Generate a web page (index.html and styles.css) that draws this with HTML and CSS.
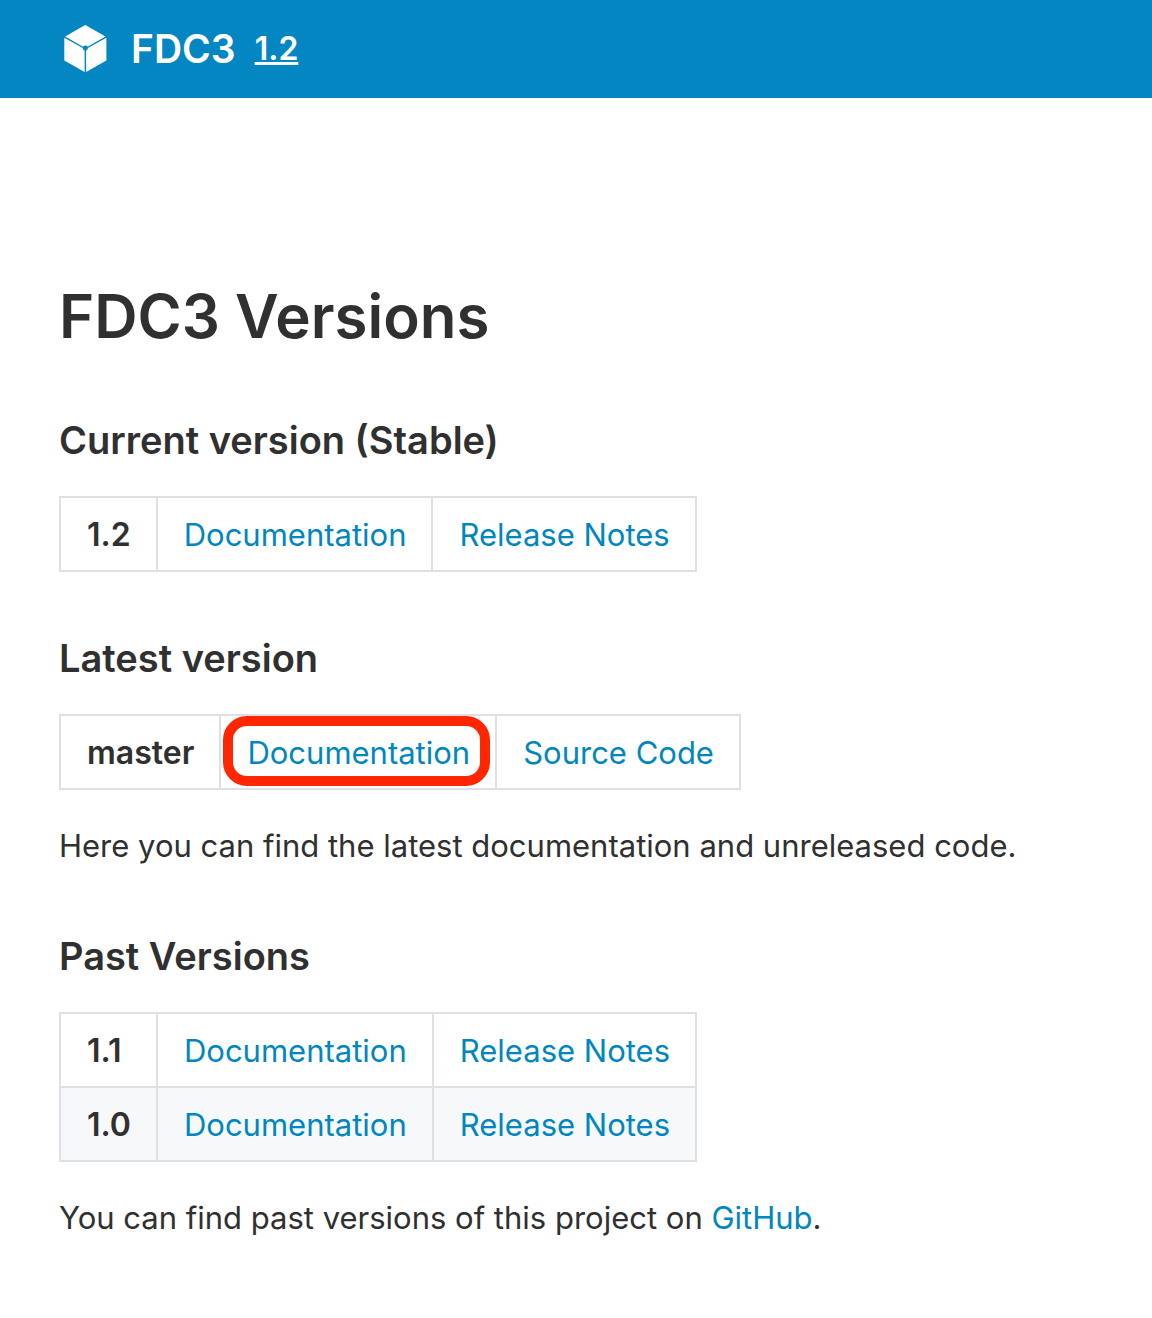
FILE: index.html
```html
<!DOCTYPE html>
<html lang="en">
<head>
<meta charset="utf-8">
<meta name="viewport" content="width=device-width, initial-scale=1">
<title>FDC3 Versions</title>
<link rel="stylesheet" href="styles.css">
</head>
<body>
<header class="site-header">
  <a class="brand" href="#">
    <svg class="logo" viewBox="0 0 52 52" aria-hidden="true">
      <path class="logo-face" d="M26.300 3 46.500 14.500 26.300 25.900 6.100 14.500Z"/>
      <path class="logo-face" d="M5.300 15.700 25.600 27V50L5.300 38.500Z"/>
      <path class="logo-face" d="M47.400 15.700 27.100 27V50L47.400 38.500Z"/>
      <circle class="logo-hub" cx="26.300" cy="26" r="2.500"/>
    </svg>
    <span class="brand-name">FDC3</span>
  </a>
  <a class="version-link" href="#">1.2</a>
</header>
<main class="content">
  <h1>FDC3 Versions</h1>
  <section>
    <h2>Current version (Stable)</h2>
    <table class="versions">
      <tbody>
        <tr><th scope="row">1.2</th><td><a href="#">Documentation</a></td><td><a href="#">Release Notes</a></td></tr>
      </tbody>
    </table>
  </section>
  <section>
    <h2>Latest version</h2>
    <table class="versions">
      <tbody>
        <tr><th scope="row">master</th><td class="marked"><a href="#">Documentation</a></td><td><a href="#">Source Code</a></td></tr>
      </tbody>
    </table>
    <p>Here you can find the latest documentation and unreleased code.</p>
  </section>
  <section>
    <h2>Past Versions</h2>
    <table class="versions">
      <tbody>
        <tr><th scope="row">1.1</th><td><a href="#">Documentation</a></td><td><a href="#">Release Notes</a></td></tr>
        <tr><th scope="row">1.0</th><td><a href="#">Documentation</a></td><td><a href="#">Release Notes</a></td></tr>
      </tbody>
    </table>
    <p>You can find past versions of this project on <a href="#">GitHub</a>.</p>
  </section>
</main>
</body>
</html>
```
FILE: styles.css
```css
* { box-sizing: border-box; }
body {
  margin: 0;
  background: #fff;
  color: #303030;
  font: 31px/48px Inter, sans-serif;
}
a { color: #0086c0; text-decoration: none; }
.site-header {
  display: flex;
  align-items: center;
  gap: 19px;
  padding: 20px 59px;
  background: #0486c2;
}
.site-header a { color: #fff; }
.brand { display: flex; align-items: center; gap: 20px; }
.logo { display: block; width: 52px; height: 52px; margin-bottom: 2px; }
.logo-face { fill: #fff; }
.logo-hub { fill: #0486c2; }
.brand-name { font-size: 39px; line-height: 58px; font-weight: 600; }
.version-link { font-size: 32px; font-weight: 600; }
.site-header .version-link { text-decoration: underline; text-decoration-thickness: 3px; }
.content { padding: 178px 59px 72px; }
h1 { margin: 0 0 54px; font-size: 60px; line-height: 80px; font-weight: 600; }
h2 { margin: 0 0 26px; font-size: 38px; line-height: 60px; font-weight: 600; }
section + section { margin-top: 56px; }
.versions { border-collapse: collapse; }
.versions th, .versions td {
  padding: 13px 25px 11px 26px;
  border: 2px solid #dfe0e6;
  font-weight: 400;
  text-align: left;
}
.versions th { font-size: 32px; font-weight: 600; }
.versions tr:nth-child(even) { background: #f6f8fa; }
p { margin: 32px 0 0; }
.marked { position: relative; }
.marked::after {
  content: "";
  position: absolute;
  inset: 0 5px 2px 2px;
  border: 10px solid #ff2600;
  border-radius: 24px;
  pointer-events: none;
}
```
